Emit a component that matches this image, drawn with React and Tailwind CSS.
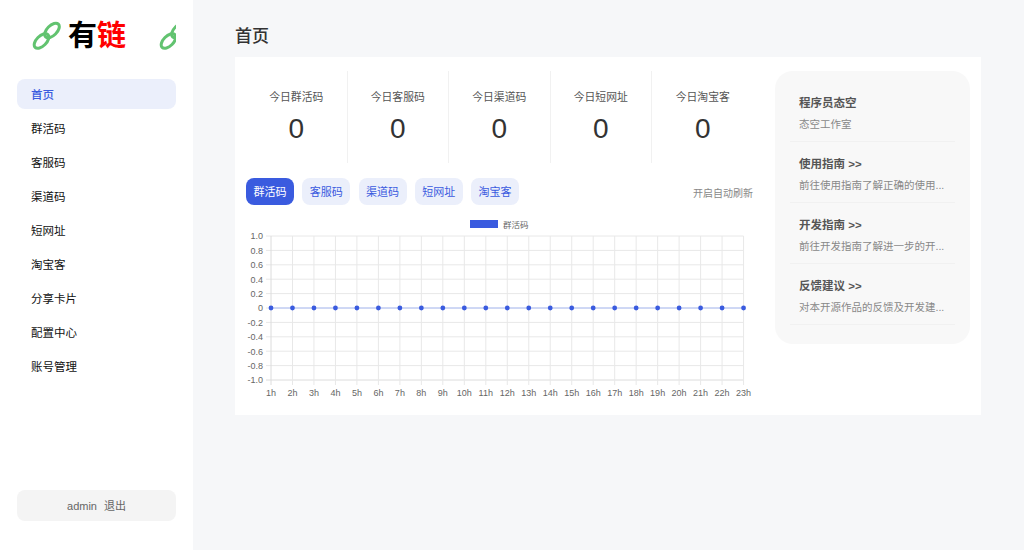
import React from "react";

const font = { fontFamily: '"Liberation Sans", "Noto Sans CJK SC", sans-serif' };

const navItems = ["首页", "群活码", "客服码", "渠道码", "短网址", "淘宝客", "分享卡片", "配置中心", "账号管理"];
const stats = ["今日群活码", "今日客服码", "今日渠道码", "今日短网址", "今日淘宝客"];
const tabs = ["群活码", "客服码", "渠道码", "短网址", "淘宝客"];
const infos = [
  { title: "程序员态空", desc: "态空工作室" },
  { title: "使用指南 >>", desc: "前往使用指南了解正确的使用..." },
  { title: "开发指南 >>", desc: "前往开发指南了解进一步的开..." },
  { title: "反馈建议 >>", desc: "对本开源作品的反馈及开发建..." },
];

const hours = Array.from({ length: 23 }, (_, i) => i + 1);
const yTicks = ["1.0", "0.8", "0.6", "0.4", "0.2", "0", "-0.2", "-0.4", "-0.6", "-0.8", "-1.0"];

const ChainIcon = () => (
  <svg width="30" height="30" viewBox="0 0 30 30" className="shrink-0" fill="none" stroke="#62c370" strokeWidth="3">
    <ellipse cx="20" cy="9.5" rx="5" ry="9" transform="rotate(45 20 9.5)" />
    <ellipse cx="9.5" cy="20" rx="5" ry="9" transform="rotate(45 9.5 20)" />
  </svg>
);

const Chart = () => {
  const xs = hours.map((h, i) => 25 + i * 21.48);
  const ys = yTicks.map((t, i) => 21 + i * 14.4);
  return (
    <svg width="520" height="190" viewBox="0 0 520 190" className="mt-[10px] block" style={font}>
      <rect x="224" y="5" width="28" height="8" fill="#3a5bdf" />
      <text x="257" y="12.5" fontSize="8.5" fill="#666">群活码</text>
      {ys.map((y, i) => (
        <g key={yTicks[i]}>
          <line x1="20" x2="497.5" y1={y} y2={y} stroke={i === 10 ? "#dcdcdc" : "#e8e8e8"} strokeWidth="1" />
          <text x="17" y={y + 3.3} fontSize="9" fill="#666" textAnchor="end">{yTicks[i]}</text>
        </g>
      ))}
      {xs.map((x, i) => (
        <g key={hours[i]}>
          <line x1={x} x2={x} y1="21" y2="170" stroke={i === 0 ? "#dcdcdc" : "#e8e8e8"} strokeWidth="1" />
          <text x={x} y="181" fontSize="9" fill="#666" textAnchor="middle">{hours[i]}h</text>
        </g>
      ))}
      <line x1="25" x2={xs[22]} y1="93" y2="93" stroke="#a9bcf5" strokeWidth="1.2" />
      {xs.map((x) => (
        <circle key={x} cx={x} cy="93" r="2.4" fill="#3a5bdf" />
      ))}
    </svg>
  );
};

const App = () => {
  return (
    <div className="flex w-[1024px] h-[550px] overflow-hidden bg-[#f6f7f9]" style={font}>
      {/* sidebar */}
      <div className="w-[193px] h-full bg-white px-[17px] flex flex-col shrink-0">
        <div className="flex items-start pl-[15px] pt-[21px] h-[79px] overflow-hidden w-[159px]">
          <div className="flex items-center gap-[6px] shrink-0 w-[127px]">
            <ChainIcon />
            <span className="text-[29px] leading-[30px] font-bold text-black whitespace-nowrap">
              有<span className="text-[#ff0000]">链</span>
            </span>
          </div>
          <ChainIcon />
        </div>
        <div className="flex flex-col gap-[4px]">
          {navItems.map((item, i) => (
            <div
              key={item}
              className={
                i === 0
                  ? "h-[30px] rounded-lg bg-[#ebeffb] text-[#3a5bdf] pl-[14px] pt-[4px] flex items-center text-[11.5px] font-medium"
                  : "h-[30px] rounded-lg text-[#111] pl-[14px] pt-[4px] flex items-center text-[11.5px]"
              }
            >
              {item}
            </div>
          ))}
        </div>
        <div className="mt-auto mb-[29px] h-[31px] rounded-lg bg-[#f4f4f4] pt-[2px] flex items-center justify-center gap-[7px] text-[11px] text-[#666]">
          <span>admin</span>
          <span>退出</span>
        </div>
      </div>

      {/* main */}
      <div className="flex-1 pl-[42px] pr-[43px] pt-[25px]">
        <div className="text-[17px] leading-6 font-medium text-[#333]">首页</div>
        <div className="mt-[8px] h-[358px] bg-white flex">
          <div className="w-[540px] pl-[11px] pt-[14px] shrink-0">
            {/* stats */}
            <div className="flex h-[92px]">
              {stats.map((s, i) => (
                <div
                  key={s}
                  className={
                    i < 4
                      ? "w-[101.5px] flex flex-col items-center border-r border-[#f1f1f1]"
                      : "w-[101.5px] flex flex-col items-center"
                  }
                >
                  <div className="mt-[18px] text-[10.8px] leading-4 text-[#555]">{s}</div>
                  <div className="mt-[8px] text-[28px] leading-8 text-[#333]">0</div>
                </div>
              ))}
            </div>
            {/* tabs */}
            <div className="flex items-center mt-[15px] pr-[22px]">
              <div className="flex gap-[8.25px]">
                {tabs.map((t, i) => (
                  <div
                    key={t}
                    className={
                      i === 0
                        ? "w-12 h-[27px] rounded-lg bg-[#3a5bdf] text-white pt-[2px] text-[11px] flex items-center justify-center"
                        : "w-12 h-[27px] rounded-lg bg-[#ebeffb] text-[#3a5bdf] pt-[2px] text-[11px] flex items-center justify-center"
                    }
                  >
                    {t}
                  </div>
                ))}
              </div>
              <div className="ml-auto mt-[4px] text-[10px] text-[#888]">开启自动刷新</div>
            </div>
            <Chart />
          </div>

          {/* info panel */}
          <div className="mt-[14px] h-[273px] w-[195px] rounded-[18px] bg-[#f8f8f8] pt-[10px] px-[15px]">
            {infos.map((info) => (
              <div key={info.title} className="h-[61px] border-b border-[#f1f1f1] pl-[9px] pt-[14px]">
                <div className="text-[11.5px] leading-4 font-semibold text-[#555]">{info.title}</div>
                <div className="mt-[5px] text-[10.5px] leading-4 text-[#888] whitespace-nowrap">{info.desc}</div>
              </div>
            ))}
          </div>
        </div>
      </div>
    </div>
  );
};

export default App;
